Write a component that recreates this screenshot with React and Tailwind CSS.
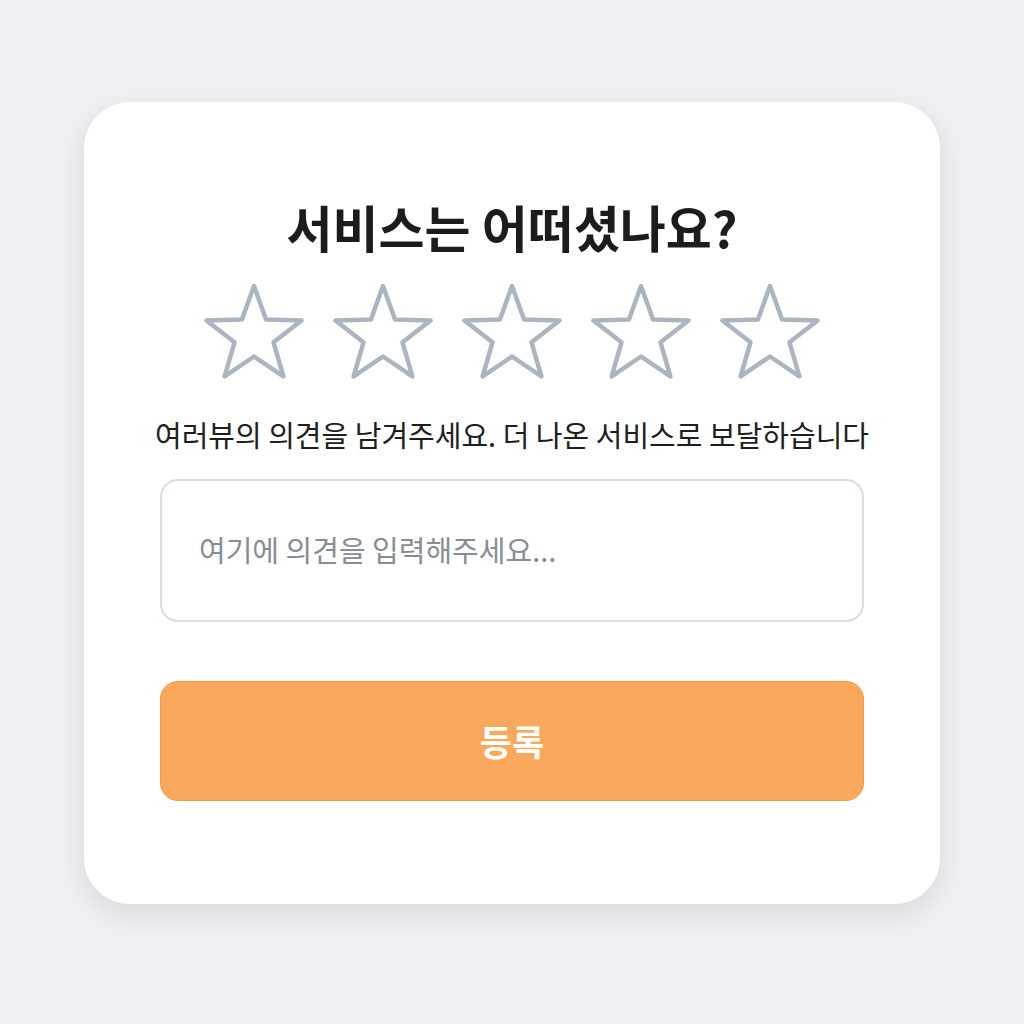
import React from "react";

function Star() {
  return (
    <svg width="104" height="98" viewBox="0 0 104 98" fill="none">
      <polygon
        points="52,2 64.05,35.41 99.55,36.55 71.5,58.33 81.39,92.45 52,72.5 22.61,92.45 32.5,58.33 4.45,36.55 39.95,35.41"
        stroke="#aab5c0"
        strokeWidth="4.5"
        strokeLinejoin="round"
        fill="white"
      />
    </svg>
  );
}

export default function App() {
  return (
    <div
      className="w-[1024px] h-[1024px] bg-[#eef0f3] pt-[102px] pl-[84px]"
      style={{ fontFamily: '"Noto Sans CJK KR", "Noto Sans", sans-serif' }}
    >
      <div className="w-[856px] h-[802px] bg-white rounded-[46px] shadow-[0_10px_30px_rgba(15,23,42,0.10)] flex flex-col items-center pt-[92px]">
        <h1 className="text-[50px] leading-[64px] font-bold text-[#1c1c1c] tracking-[0em]">
          서비스는 어떠셨나요?
        </h1>
        <div className="flex gap-[25px] mt-[26px]">
          <Star />
          <Star />
          <Star />
          <Star />
          <Star />
        </div>
        <p className="mt-[32px] text-[29px] leading-[40px] text-[#1e1e1e] tracking-[0em]">
          여러뷰의 의견을 남겨주세요. 더 나온 서비스로 보달하습니다
        </p>
        <div className="mt-[25px] w-[704px] h-[143px] border-2 border-[#d6dde6] rounded-[18px] flex items-center pl-[37px] pb-[2px]">
          <span className="text-[29px] text-[#878d95] tracking-[0em]">
            여기에 의견을 입력해주세요...
          </span>
        </div>
        <button className="mt-[59px] w-[704px] h-[120px] bg-[#faa95c] border border-[#f59a3f] rounded-[18px] flex items-center justify-center text-white text-[35px] font-bold">
          등록
        </button>
      </div>
    </div>
  );
}
